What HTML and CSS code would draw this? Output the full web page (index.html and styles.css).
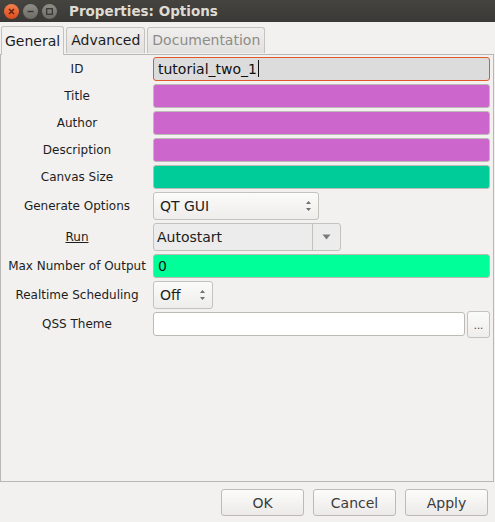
FILE: index.html
```html
<!DOCTYPE html>
<html lang="en">
<head>
  <meta charset="UTF-8" />
  <title>Properties: Options</title>
  <link rel="stylesheet" href="styles.css">
</head>
<body>
  <div class="ikkuna">
    <!-- Otsikkopalkki -->
    <div class="otsikko">
      <div class="napit">
        <span class="nappi sulje">
          <svg width="7" height="7" viewBox="0 0 7 7"><path d="M1 1L6 6M6 1L1 6" stroke="#5a200c" stroke-width="1.4"/></svg>
        </span>
        <span class="nappi">
          <svg width="7" height="7" viewBox="0 0 7 7"><path d="M0.5 3.5H6.5" stroke="#34332f" stroke-width="1.4"/></svg>
        </span>
        <span class="nappi">
          <svg width="7" height="7" viewBox="0 0 7 7"><rect x="0.7" y="0.7" width="5.6" height="5.6" fill="none" stroke="#34332f" stroke-width="1.2"/></svg>
        </span>
      </div>
      <span class="otsikko-teksti">Properties: Options</span>
    </div>

    <div class="valilehdet">
      <div class="valilehti aktiivinen">General</div>
      <div class="valilehti">Advanced</div>
      <div class="valilehti pois">Documentation</div>
    </div>

    <div class="paneeli">
      <div class="rivi">
        <label>ID</label>
        <div class="kentta id-kentta">tutorial_two_1<span class="kursori"></span></div>
      </div>
      <div class="rivi">
        <label>Title</label>
        <div class="kentta violetti"></div>
      </div>
      <div class="rivi">
        <label>Author</label>
        <div class="kentta violetti"></div>
      </div>
      <div class="rivi">
        <label>Description</label>
        <div class="kentta violetti"></div>
      </div>
      <div class="rivi">
        <label>Canvas Size</label>
        <div class="kentta turkoosi"></div>
      </div>
      <div class="rivi iso">
        <label>Generate Options</label>
        <div class="valikko generate">
          <span>QT GUI</span>
          <svg class="nuolet" width="7" height="12" viewBox="0 0 7 12"><path d="M3.5 1L6 4H1Z M3.5 11L6 8H1Z" fill="#707070"/></svg>
        </div>
      </div>
      <div class="rivi iso">
        <label class="alleviivattu">Run</label>
        <div class="combo">
          <span>Autostart</span>
          <span class="combo-nuoli">
            <svg width="9" height="6" viewBox="0 0 9 6"><path d="M0.5 0.5H8.5L4.5 5.5Z" fill="#7a7a7a"/></svg>
          </span>
        </div>
      </div>
      <div class="rivi">
        <label>Max Number of Output</label>
        <div class="kentta vihrea">0</div>
      </div>
      <div class="rivi iso">
        <label>Realtime Scheduling</label>
        <div class="valikko realtime">
          <span>Off</span>
          <svg class="nuolet" width="7" height="12" viewBox="0 0 7 12"><path d="M3.5 1L6 4H1Z M3.5 11L6 8H1Z" fill="#707070"/></svg>
        </div>
      </div>
      <div class="rivi">
        <label>QSS Theme</label>
        <div class="kentta valkoinen"></div>
        <div class="pisteet">...</div>
      </div>
    </div>

    <div class="alapalkki">
      <button>OK</button>
      <button>Cancel</button>
      <button>Apply</button>
    </div>
  </div>
</body>
</html>
```

FILE: styles.css
```css
body {
  margin: 0;
  font-family: "DejaVu Sans", sans-serif;
  background-color: #f2f1f0;
  color: #3c3c3c;
}

.ikkuna {
  width: 495px;
  height: 522px;
  display: flex;
  flex-direction: column;
  background-color: #f2f1f0;
}

/* Otsikkopalkki */
.otsikko {
  height: 22px;
  flex-shrink: 0;
  background: linear-gradient(#45443f, #3a3935);
  display: flex;
  align-items: center;
  padding-left: 4px;
}

.napit {
  display: flex;
  gap: 4px;
}

.nappi {
  width: 15px;
  height: 15px;
  border-radius: 50%;
  background: linear-gradient(#8f8e87, #6c6b65);
  display: flex;
  align-items: center;
  justify-content: center;
}

.sulje {
  background: linear-gradient(#f3814f, #dd4a1c);
}

.otsikko-teksti {
  margin-left: 12px;
  color: #dfdbd2;
  font-weight: bold;
  font-size: 13.5px;
}

/* Välilehdet */
.valilehdet {
  display: flex;
  align-items: flex-end;
  gap: 2px;
  height: 33px;
  flex-shrink: 0;
  padding-left: 1px;
  margin-bottom: -1px;
  position: relative;
  z-index: 1;
}

.valilehti {
  height: 25px;
  padding: 0 4px;
  font-size: 14px;
  line-height: 25px;
  color: #1d1d1d;
  background: linear-gradient(#f0efee, #e2e1df);
  border: 1px solid #c4c2bd;
  border-bottom: none;
  border-radius: 3px 3px 0 0;
  margin-bottom: 2px;
}

.valilehti.aktiivinen {
  height: 28px;
  line-height: 28px;
  background: #f2f1f0;
  margin-bottom: 0;
  padding: 0 3px;
}

.valilehti.pois {
  color: #8e8c88;
}

/* Paneeli */
.paneeli {
  height: 428px;
  flex-shrink: 0;
  border: 1px solid #b9b7b2;
  margin: 0 1px 0 0;
  box-sizing: border-box;
  padding: 2px 3px 0 0;
  display: flex;
  flex-direction: column;
  gap: 3px;
}

.rivi {
  display: flex;
  align-items: center;
  height: 24px;
}

.rivi.iso {
  height: 28px;
}

.rivi label {
  width: 152px;
  flex-shrink: 0;
  text-align: center;
  font-size: 12px;
  color: #1d1d1d;
}

.alleviivattu {
  text-decoration: underline;
}

.kentta {
  flex: 1;
  height: 24px;
  box-sizing: border-box;
  border: 1px solid #bdbab5;
  border-radius: 3px;
  font-size: 14px;
  line-height: 22px;
  padding-left: 4px;
  color: #111;
}

.id-kentta {
  background-color: #dcdcdc;
  border-color: #e0592a;
}

.kursori {
  display: inline-block;
  width: 1px;
  height: 17px;
  background: #111;
  vertical-align: -3px;
  margin-left: 1px;
}

.violetti {
  background-color: #cc66cc;
}

.turkoosi {
  background-color: #00cc99;
}

.vihrea {
  background-color: #00ff99;
}

.valkoinen {
  background-color: #fff;
}

.valikko,
.combo {
  height: 28px;
  box-sizing: border-box;
  border: 1px solid #c4c2bd;
  border-radius: 3px;
  background: linear-gradient(#fbfbfa, #eeedec);
  font-size: 14px;
  padding-left: 6px;
  color: #1d1d1d;
  display: flex;
  align-items: center;
  justify-content: space-between;
}

.generate {
  width: 166px;
  padding-right: 6px;
}

.realtime {
  width: 60px;
  padding-right: 6px;
}

.combo {
  width: 188px;
  background: #ececec;
  padding-left: 3px;
  align-items: stretch;
}

.combo span:first-child {
  display: flex;
  align-items: center;
}

.combo-nuoli {
  width: 27px;
  border-left: 1px solid #c4c2bd;
  display: flex;
  align-items: center;
  justify-content: center;
}

.pisteet {
  width: 23px;
  height: 27px;
  margin-left: 2px;
  box-sizing: border-box;
  border: 1px solid #c4c2bd;
  border-radius: 3px;
  background: linear-gradient(#fbfbfa, #eeedec);
  font-size: 10px;
  text-align: center;
  line-height: 27px;
  color: #3c3c3c;
}

/* Alapalkki */
.alapalkki {
  display: flex;
  justify-content: flex-end;
  gap: 9px;
  padding: 7px 7px 0 0;
}

.alapalkki button {
  width: 83px;
  height: 27px;
  font-family: "DejaVu Sans", sans-serif;
  font-size: 14px;
  color: #3c3c3c;
  border: 1px solid #bdbab5;
  border-radius: 3px;
  background: linear-gradient(#fcfcfb, #eceae8);
  padding: 0;
}
```
